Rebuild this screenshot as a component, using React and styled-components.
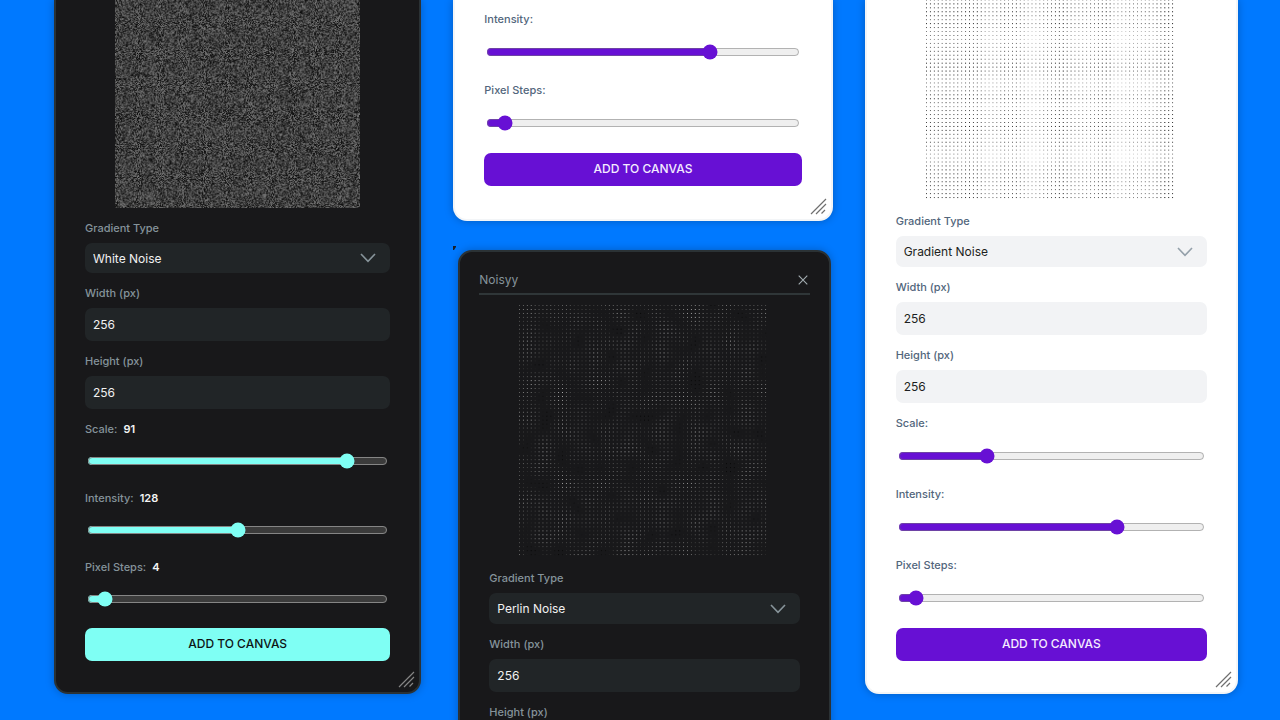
import React, { useEffect, useRef, useState } from 'react';
import styled, { createGlobalStyle, ThemeProvider } from 'styled-components';

const dark = {
  scheme: 'dark',
  background: '#18181a',
  border: '#2b3235',
  label: '#85939a',
  value: '#f4f4f4',
  field: '#212527',
  fieldText: '#f1f1f1',
  accent: '#7ffff4',
  buttonText: '#0d1414',
  icon: '#87949a',
  grip: '#858585',
};

const light = {
  scheme: 'light',
  background: '#ffffff',
  border: '#f3f5f7',
  label: '#52667c',
  value: '#18181a',
  field: '#f2f3f5',
  fieldText: '#1d1f21',
  accent: '#6710d4',
  buttonText: '#f4ecff',
  icon: '#94a0aa',
  grip: '#6f6f6f',
};

const GlobalStyle = createGlobalStyle`
  *, *::before, *::after {
    box-sizing: border-box;
  }
  body {
    margin: 0;
    background-color: #0079ff;
    font-family: Inter, 'Liberation Sans', sans-serif;
  }
`;

const Board = styled.main`
  display: grid;
  grid-template-columns: 367fr 379fr 373fr;
  column-gap: 32px;
  align-items: start;
  height: 100vh;
  padding: 0 42px 0 54px;
  overflow: hidden;
`;

const Column = styled.div`
  display: flex;
  flex-direction: column;
  gap: 29px;
`;

const Panel = styled.section`
  position: relative;
  padding: ${({ $cut }) => ($cut ? '0 29px 31px' : '18px 29px 31px')};
  border: 2px solid ${({ theme }) => theme.border};
  border-top-width: ${({ $cut }) => ($cut ? '0' : '2px')};
  border-radius: ${({ $cut }) => ($cut ? '0 0 14px 14px' : '14px')};
  margin: ${({ $inset }) => ($inset ? '0 2px 0 5px' : '0')};
  background-color: ${({ theme }) => theme.background};
  box-shadow: 0 0 8px rgba(0, 0, 0, 0.25);
  color-scheme: ${({ theme }) => theme.scheme};
`;

const Header = styled.header`
  display: flex;
  justify-content: space-between;
  align-items: center;
  height: 25px;
  padding-bottom: 3px;
  margin: 0 -10px 10px;
  border-bottom: 2px solid #2f3638;
`;

const Title = styled.h1`
  margin: 0;
  font-size: 12px;
  line-height: 16px;
  font-weight: 400;
  color: ${({ theme }) => theme.label};
`;

const CloseButton = styled.button`
  display: flex;
  padding: 2px;
  border: none;
  background: none;
  color: #a3adb1;
`;

const Preview = styled.div`
  display: flex;
  justify-content: center;
  align-items: flex-end;
  height: ${({ $height }) => $height}px;
  margin-bottom: 12px;
  overflow: hidden;
`;

const NoiseCanvas = styled.canvas`
  flex-shrink: 0;
  width: ${({ $width }) => $width}px;
  height: ${({ $width }) => $width + 3}px;
`;

const FieldGroup = styled.div`
  display: flex;
  flex-direction: column;
  gap: 7px;
  margin-bottom: 12px;
`;

const Label = styled.label`
  font-size: 11px;
  line-height: 16px;
  font-weight: 500;
  color: ${({ theme }) => theme.label};
`;

const Value = styled.output`
  margin-left: 6px;
  font-weight: 600;
  color: ${({ theme }) => theme.value};
`;

const SelectBox = styled.div`
  display: grid;
  align-items: center;

  > * {
    grid-area: 1 / 1;
  }

  svg {
    justify-self: end;
    margin-right: 14px;
    color: ${({ theme }) => theme.icon};
    pointer-events: none;
  }
`;

const Select = styled.select`
  appearance: none;
  width: 100%;
  height: ${({ $compact }) => ($compact ? '30px' : '31px')};
  padding: 0 8px;
  border: none;
  border-radius: 7px;
  background-color: ${({ theme }) => theme.field};
  color: ${({ theme }) => theme.fieldText};
  font-family: inherit;
  font-size: 12px;
`;

const NumberInput = styled.input`
  width: 100%;
  height: 33px;
  padding: 0 8px;
  border: none;
  border-radius: 7px;
  background-color: ${({ theme }) => theme.field};
  color: ${({ theme }) => theme.fieldText};
  font-family: inherit;
  font-size: 12px;
  appearance: textfield;
`;

const SliderGroup = styled.div`
  display: flex;
  flex-direction: column;
  gap: ${({ $compact }) => ($compact ? '16px' : '17px')};
  margin-bottom: ${({ $compact }) => ($compact ? '21px' : '22px')};
`;

const Range = styled.input`
  height: 16px;
  margin: 0 2px;
  accent-color: ${({ theme }) => theme.accent};
`;

const AddButton = styled.button`
  display: block;
  width: 100%;
  height: 33px;
  padding: 0 0 2px;
  border: none;
  border-radius: 7px;
  background-color: ${({ theme }) => theme.accent};
  color: ${({ theme }) => theme.buttonText};
  font-family: inherit;
  font-size: 12px;
  font-weight: 500;
`;

const Grip = styled.svg`
  position: absolute;
  right: 4px;
  bottom: 4px;
  color: ${({ theme }) => theme.grip};
`;

const Speck = styled.svg`
  position: absolute;
  top: -6px;
  left: -7px;
`;

const createRandom = seed => {
  let state = seed;
  return () => {
    state = (state * 1664525 + 1013904223) % 4294967296;
    return state / 4294967296;
  };
};

const drawWhite = ctx => {
  const random = createRandom(7);
  const image = ctx.createImageData(256, 256);
  for (let i = 0; i < image.data.length; i += 4) {
    const shade = 10 + random() * 110;
    image.data[i] = shade;
    image.data[i + 1] = shade;
    image.data[i + 2] = shade;
    image.data[i + 3] = 255;
  }
  ctx.putImageData(image, 0, 0);
};

const drawPerlin = ctx => {
  const random = createRandom(23);
  const angles = Array.from({ length: 400 }, () => random() * Math.PI * 2);
  const fade = t => t * t * (3 - 2 * t);
  const mix = (a, b, t) => a + (b - a) * t;
  const corner = (cx, cy, x, y) => {
    const angle = angles[cy * 20 + cx];
    return Math.cos(angle) * (x - cx) + Math.sin(angle) * (y - cy);
  };
  for (let row = 0; row < 64; row += 1) {
    for (let col = 0; col < 64; col += 1) {
      const x = col / 4.3;
      const y = row / 4.3;
      const cx = Math.floor(x);
      const cy = Math.floor(y);
      const top = mix(corner(cx, cy, x, y), corner(cx + 1, cy, x, y), fade(x - cx));
      const bottom = mix(corner(cx, cy + 1, x, y), corner(cx + 1, cy + 1, x, y), fade(x - cx));
      const noise = mix(top, bottom, fade(y - cy));
      const shade = Math.max(8, Math.min(170, 86 + noise * 165));
      ctx.fillStyle = `rgb(${shade}, ${shade}, ${shade})`;
      ctx.fillRect(col * 4, row * 4, 1, 1);
    }
  }
};

// darkness of each dot column and row, 0 (faint) to 9 (solid)
const columnTone = '5556686665666653333454554321123445776433333355751111222233356877';
const rowTone = '5554555555555565663642213344567653223563144456543432112455';

const drawGradient = ctx => {
  for (let row = 0; row < 64; row += 1) {
    for (let col = 0; col < 64; col += 1) {
      const tone = Number(columnTone[col]) + Number(rowTone[row % rowTone.length]);
      ctx.fillStyle = `rgba(0, 0, 0, ${Math.min(1, tone / 13)})`;
      ctx.fillRect(col * 4, row * 4, 1, 1);
    }
  }
};

const painters = {
  'White Noise': drawWhite,
  'Perlin Noise': drawPerlin,
  'Gradient Noise': drawGradient,
};

const NoisePreview = ({ type, width, height }) => {
  const canvas = useRef(null);

  useEffect(() => {
    const ctx = canvas.current.getContext('2d');
    ctx.clearRect(0, 0, 256, 256);
    painters[type](ctx);
  }, [type]);

  return (
    <Preview $height={height}>
      <NoiseCanvas ref={canvas} width={256} height={256} $width={width} />
    </Preview>
  );
};

const Slider = ({ id, label, initial, max, showValue, compact }) => {
  const [value, setValue] = useState(initial);
  return (
    <SliderGroup $compact={compact}>
      <Label htmlFor={id}>
        {label}:{showValue && <Value>{value}</Value>}
      </Label>
      <Range
        id={id}
        type="range"
        min={0}
        max={max}
        value={value}
        onChange={event => setValue(Number(event.target.value))}
      />
    </SliderGroup>
  );
};

const Fields = ({ id, type, onTypeChange, compact }) => (
  <>
    <FieldGroup>
      <Label htmlFor={`${id}-type`}>Gradient Type</Label>
      <SelectBox>
        <Select
          id={`${id}-type`}
          value={type}
          onChange={event => onTypeChange(event.target.value)}
          $compact={compact}
        >
          {Object.keys(painters).map(name => (
            <option key={name}>{name}</option>
          ))}
        </Select>
        <svg width="16" height="10" viewBox="0 0 16 10" fill="none" aria-hidden="true">
          <path d="M1 1L8 8.4L15 1" stroke="currentColor" strokeWidth="1.6" />
        </svg>
      </SelectBox>
    </FieldGroup>
    <FieldGroup>
      <Label htmlFor={`${id}-width`}>Width (px)</Label>
      <NumberInput id={`${id}-width`} type="text" inputMode="numeric" defaultValue="256" />
    </FieldGroup>
    <FieldGroup>
      <Label htmlFor={`${id}-height`}>Height (px)</Label>
      <NumberInput id={`${id}-height`} type="text" inputMode="numeric" defaultValue="256" />
    </FieldGroup>
  </>
);

const ResizeGrip = () => (
  <Grip width="17" height="17" viewBox="0 0 17 17" aria-hidden="true">
    <path
      d="M1 16L16 1M6 16L16 6M11.5 15.5L15 12"
      fill="none"
      stroke="currentColor"
      strokeWidth="1.2"
    />
  </Grip>
);

const WhitePanel = () => {
  const [type, setType] = useState('White Noise');
  return (
    <ThemeProvider theme={dark}>
      <Panel $cut>
        <NoisePreview type={type} width={245} height={208} />
        <Fields id="white" type={type} onTypeChange={setType} compact />
        <Slider id="white-scale" label="Scale" initial={91} max={103} showValue compact />
        <Slider id="white-intensity" label="Intensity" initial={128} max={256} showValue compact />
        <Slider id="white-steps" label="Pixel Steps" initial={4} max={115} showValue compact />
        <AddButton type="button">ADD TO CANVAS</AddButton>
        <ResizeGrip />
      </Panel>
    </ThemeProvider>
  );
};

const TopPanel = styled(Panel)`
  padding: 11px 29px 33px;
`;

const SlidersPanel = () => (
  <ThemeProvider theme={light}>
    <TopPanel $cut>
      <Slider id="top-intensity" label="Intensity" initial={186} max={256} />
      <Slider id="top-steps" label="Pixel Steps" initial={4} max={110} />
      <AddButton type="button">ADD TO CANVAS</AddButton>
      <ResizeGrip />
    </TopPanel>
  </ThemeProvider>
);

const PerlinPanel = () => {
  const [type, setType] = useState('Perlin Noise');
  return (
    <ThemeProvider theme={dark}>
      <Panel $inset>
        <Speck width="3" height="4" viewBox="0 0 3 4" aria-hidden="true">
          <path d="M0 0H3V1L1 4H0Z" fill="#18202a" />
        </Speck>
        <Header>
          <Title>Noisyy</Title>
          <CloseButton type="button" aria-label="Close">
            <svg width="10" height="10" viewBox="0 0 10 10" aria-hidden="true">
              <path d="M0.7 0.7L9.3 9.3M9.3 0.7L0.7 9.3" stroke="currentColor" strokeWidth="1.1" />
            </svg>
          </CloseButton>
        </Header>
        <NoisePreview type={type} width={250} height={253} />
        <Fields id="perlin" type={type} onTypeChange={setType} />
      </Panel>
    </ThemeProvider>
  );
};

const GradientPanel = () => {
  const [type, setType] = useState('Gradient Noise');
  return (
    <ThemeProvider theme={light}>
      <Panel $cut>
        <NoisePreview type={type} width={250} height={201} />
        <Fields id="gradient" type={type} onTypeChange={setType} />
        <Slider id="gradient-scale" label="Scale" initial={28} max={100} />
        <Slider id="gradient-intensity" label="Intensity" initial={186} max={256} />
        <Slider id="gradient-steps" label="Pixel Steps" initial={4} max={110} />
        <AddButton type="button">ADD TO CANVAS</AddButton>
        <ResizeGrip />
      </Panel>
    </ThemeProvider>
  );
};

const App = () => (
  <>
    <GlobalStyle />
    <Board>
      <Column>
        <WhitePanel />
      </Column>
      <Column>
        <SlidersPanel />
        <PerlinPanel />
      </Column>
      <Column>
        <GradientPanel />
      </Column>
    </Board>
  </>
);

export default App;
